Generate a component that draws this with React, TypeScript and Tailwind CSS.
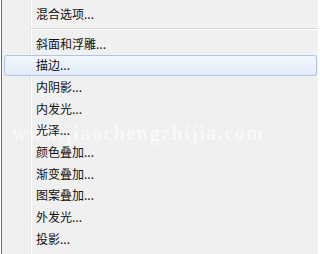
const items = [
  "内阴影...",
  "内发光...",
  "光泽...",
  "颜色叠加...",
  "渐变叠加...",
  "图案叠加...",
  "外发光...",
  "投影...",
];

export default function App() {
  return (
    <div
      className="flex h-[254px] w-[318px] overflow-hidden bg-[#f0f0f0] text-[12px] text-[#111]"
      style={{ fontFamily: '"Noto Sans CJK SC", "Noto Sans", sans-serif' }}
    >
      {/* Left edge */}
      <div className="w-px bg-white" />
      <div className="w-px bg-[#c24848]" />

      <div className="relative flex-1 pt-[3px]">
        {/* Icon gutter line */}
        <div className="absolute inset-y-0 left-[28px] w-px bg-[#e2e3e3]" />
        <div className="absolute inset-y-0 left-[29px] w-px bg-white" />

        {/* Watermark, behind the menu text */}
        <div
          className="absolute left-[10px] top-[118px] text-[20px] font-bold tracking-[1.5px] text-white/60"
          style={{ fontFamily: '"Liberation Serif", serif' }}
        >
          www.jiaochengzhijia.com
        </div>

        <div className="relative flex h-[22px] items-center pl-[34px]">混合选项...</div>

        {/* Separator */}
        <div className="relative flex h-[8px] flex-col justify-center pl-[29px]">
          <div className="h-px bg-[#d9d9d9]" />
          <div className="h-px bg-white" />
        </div>

        <div className="relative flex h-[21.67px] items-center pl-[34px]">斜面和浮雕...</div>

        <div className="relative ml-[2px] mr-[1px] flex h-[21.67px] items-center rounded-[3px] border border-[#aec5e6] bg-gradient-to-b from-[#f3f7fd] to-[#e2ecfa] pl-[31px]">
          描边...
        </div>

        {items.map((t) => (
          <div key={t} className="relative flex h-[21.67px] items-center pl-[34px]">
            {t}
          </div>
        ))}
      </div>
    </div>
  );
}
